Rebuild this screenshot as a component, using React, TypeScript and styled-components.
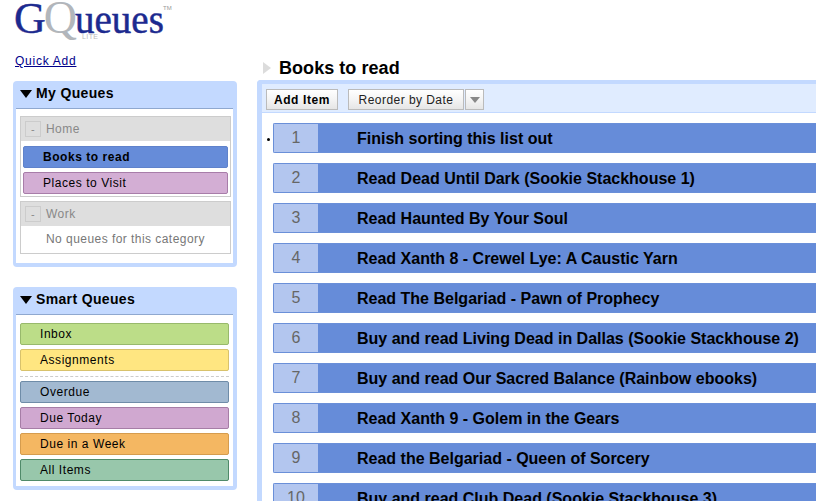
import React from 'react';
import styled, { createGlobalStyle } from 'styled-components';

const GlobalStyle = createGlobalStyle`
  html, body {
    margin: 0;
    padding: 0;
    height: 501px;
    overflow: hidden;
    background: #fff;
    font-family: 'Liberation Sans', Arial, sans-serif;
  }
`;

const myQueues = [
  { name: 'Books to read', bg: '#668cd9', line: '#5f82cb', bold: true },
  { name: 'Places to Visit', bg: '#d3aed4', line: '#a87da9', bold: false },
];

const smartTop = [
  { name: 'Inbox', bg: '#bcdd88', line: '#98b96c' },
  { name: 'Assignments', bg: '#ffe681', line: '#d8c26c' },
];

const smartBottom = [
  { name: 'Overdue', bg: '#a2b9d1', line: '#6f8ca8' },
  { name: 'Due Today', bg: '#d0a8d0', line: '#a67da6' },
  { name: 'Due in a Week', bg: '#f4b762', line: '#d59c4e' },
  { name: 'All Items', bg: '#98c7ab', line: '#4f8a69' },
];

const items = [
  'Finish sorting this list out',
  'Read Dead Until Dark (Sookie Stackhouse 1)',
  'Read Haunted By Your Soul',
  'Read Xanth 8 - Crewel Lye: A Caustic Yarn',
  'Read The Belgariad - Pawn of Prophecy',
  'Buy and read Living Dead in Dallas (Sookie Stackhouse 2)',
  'Buy and read Our Sacred Balance (Rainbow ebooks)',
  'Read Xanth 9 - Golem in the Gears',
  'Read the Belgariad - Queen of Sorcery',
  'Buy and read Club Dead (Sookie Stackhouse 3)',
];

const DownArrow = () => (
  <HeadArrow viewBox="0 0 12 8" aria-hidden="true">
    <path d="M0 0h12L6 8z" fill="#000" />
  </HeadArrow>
);

const App = () => {
  return (
    <Page>
      <GlobalStyle />
      <Sidebar>
        <Logo>
          <LogoG>G</LogoG>
          <LogoQ>Q</LogoQ>
          <LogoRest>ueues</LogoRest>
          <LogoTm>TM</LogoTm>
          <LogoLite>LITE</LogoLite>
        </Logo>
        <QuickAdd href="#">Quick Add</QuickAdd>
        <Panel>
          <PanelHead>
            <DownArrow />
            My Queues
          </PanelHead>
          <PanelBody>
            <Group>
              <GroupHead>
                <Toggle>-</Toggle>
                Home
              </GroupHead>
              <GroupList>
                {myQueues.map((q) => (
                  <Queue key={q.name} $bg={q.bg} $line={q.line} $bold={q.bold} $indent={20}>
                    {q.name}
                  </Queue>
                ))}
              </GroupList>
            </Group>
            <Group>
              <GroupHead>
                <Toggle>-</Toggle>
                Work
              </GroupHead>
              <EmptyNote>No queues for this category</EmptyNote>
            </Group>
          </PanelBody>
        </Panel>
        <Panel>
          <PanelHead>
            <DownArrow />
            Smart Queues
          </PanelHead>
          <SmartBody>
            {smartTop.map((q) => (
              <Queue key={q.name} $bg={q.bg} $line={q.line} $indent={20}>
                {q.name}
              </Queue>
            ))}
            <Dashed />
            {smartBottom.map((q) => (
              <Queue key={q.name} $bg={q.bg} $line={q.line} $indent={20}>
                {q.name}
              </Queue>
            ))}
          </SmartBody>
        </Panel>
      </Sidebar>
      <Main>
        <TitleRow>
          <TitleArrow viewBox="0 0 8 12" aria-hidden="true">
            <path d="M0 0l8 6-8 6z" fill="#dcdcdc" />
          </TitleArrow>
          <Title>Books to read</Title>
        </TitleRow>
        <ListPanel>
          <Toolbar>
            <AddButton>Add Item</AddButton>
            <ReorderButton>Reorder by Date</ReorderButton>
            <ArrowButton>
              <svg width="10" height="6" viewBox="0 0 10 6" aria-hidden="true">
                <path d="M0 0h10L5 6z" fill="#888" />
              </svg>
            </ArrowButton>
          </Toolbar>
          <List>
            {items.map((text, i) => (
              <Row key={text}>
                {i === 0 && <Bullet />}
                <RowNumber>{i + 1}</RowNumber>
                <RowText>{text}</RowText>
              </Row>
            ))}
          </List>
        </ListPanel>
      </Main>
    </Page>
  );
};

const Page = styled.div`
  display: flex;
  width: 816px;
  height: 501px;
  overflow: hidden;
  color: #000;
`;

const Sidebar = styled.div`
  flex: none;
  width: 224px;
  margin-left: 13px;
  display: flex;
  flex-direction: column;
`;

const Logo = styled.div`
  position: relative;
  height: 53px;
  padding-left: 1px;
  display: flex;
  align-items: baseline;
  font-family: 'Liberation Serif', serif;
  color: #1c2a8f;
  white-space: nowrap;
`;

const LogoG = styled.span`
  font-size: 44px;
  line-height: 36px;
  -webkit-text-stroke: 0.4px #1c2a8f;
`;

const LogoQ = styled.span`
  font-size: 46px;
  line-height: 36px;
  margin-left: -2px;
  color: #b2b6bb;
`;

const LogoRest = styled.span`
  font-size: 39px;
  line-height: 36px;
  margin-left: -2px;
  -webkit-text-stroke: 0.5px #1c2a8f;
`;

const LogoTm = styled.span`
  position: absolute;
  left: 150px;
  top: 5px;
  font: 6px 'Liberation Sans', sans-serif;
  color: #999;
`;

const LogoLite = styled.span`
  position: absolute;
  left: 69px;
  top: 33px;
  font: 7px 'Liberation Sans', sans-serif;
  letter-spacing: 0.4px;
  color: #bbb;
`;

const QuickAdd = styled.a`
  align-self: flex-start;
  margin-left: 2px;
  font-size: 12px;
  line-height: 17px;
  letter-spacing: 0.75px;
  color: #00008b;
`;

const Panel = styled.section`
  margin-top: 11px;
  background: #c3d9ff;
  border-radius: 4px;
  padding: 0 4px 4px 3px;

  & + & {
    margin-top: 20px;
  }
`;

const PanelHead = styled.h3`
  margin: 0;
  height: 27px;
  padding: 0 0 3px 4px;
  box-sizing: border-box;
  display: flex;
  align-items: center;
  gap: 4px;
  font-size: 14px;
  font-weight: 700;
  letter-spacing: 0.35px;
`;

const HeadArrow = styled.svg`
  width: 12px;
  height: 8px;
  margin-top: 2px;
`;

const PanelBody = styled.div`
  background: #fff;
  border-top: 1px solid #8fa8cf;
  padding: 7px 2px 9px 4px;
  display: flex;
  flex-direction: column;
  gap: 4px;
`;

const SmartBody = styled.div`
  background: #fff;
  border-top: 1px solid #8fa8cf;
  padding: 8px 4px 5px 4px;
  display: flex;
  flex-direction: column;
  gap: 4px;
`;

const Group = styled.div`
  border: 1px solid #ccc;
  border-top: none;
`;

const GroupHead = styled.div`
  height: 25px;
  margin: 0 -1px;
  padding: 0 0 1px 4px;
  background: #dedede;
  border: 1px solid #ccc;
  border-bottom: none;
  box-sizing: border-box;
  display: flex;
  align-items: center;
  gap: 5px;
  font-size: 12px;
  letter-spacing: 0.45px;
  color: #888;
`;

const Toggle = styled.span`
  width: 14px;
  height: 14px;
  border: 1px solid #ccc;
  display: flex;
  align-items: center;
  justify-content: center;
  font-size: 11px;
  color: #888;
`;

const GroupList = styled.div`
  padding: 5px 2px 2px;
  display: flex;
  flex-direction: column;
  gap: 4px;
`;

const EmptyNote = styled.div`
  height: 27px;
  line-height: 26px;
  padding-left: 25px;
  font-size: 12px;
  letter-spacing: 0.45px;
  color: #777;
`;

const Queue = styled.div<{ $bg: string; $line: string; $bold?: boolean; $indent: number }>`
  height: 22px;
  box-sizing: border-box;
  background: ${(p) => p.$bg};
  border: 1px solid ${(p) => p.$line};
  border-radius: 2px;
  padding-left: ${(p) => p.$indent - 1}px;
  font-size: 12px;
  font-weight: ${(p) => (p.$bold ? 700 : 400)};
  letter-spacing: 0.55px;
  line-height: 20px;
`;

const Dashed = styled.div`
  height: 1px;
  box-sizing: border-box;
  margin-top: 1px;
  border-top: 1px dashed #ccc;
`;

const Main = styled.div`
  flex: 1;
  min-width: 0;
  margin-left: 20px;
  display: flex;
  flex-direction: column;
`;

const TitleRow = styled.div`
  height: 80px;
  box-sizing: border-box;
  padding: 56px 0 0 6px;
  display: flex;
  align-items: center;
  gap: 8px;
`;

const TitleArrow = styled.svg`
  width: 8px;
  height: 12px;
`;

const Title = styled.h1`
  margin: 0;
  font-size: 18px;
  line-height: 20px;
  font-weight: 700;
  letter-spacing: 0.05px;
`;

const ListPanel = styled.div`
  flex: 1;
  min-height: 0;
  background: #fff;
  border-top: 4px solid #c3d9ff;
  border-left: 5px solid #c3d9ff;
  border-top-left-radius: 4px;
`;

const Toolbar = styled.div`
  height: 29px;
  box-sizing: border-box;
  background: #e0ecff;
  border-bottom: 1px solid #c3d9ff;
  display: flex;
  align-items: flex-start;
  padding: 5px 0 0 4px;
`;

const AddButton = styled.button`
  width: 72px;
  height: 21px;
  box-sizing: border-box;
  padding: 0;
  border: 1px solid #bbb;
  background: linear-gradient(#fff, #f4f4f4 50%, #e6e6e6);
  font: 700 12px 'Liberation Sans', sans-serif;
  letter-spacing: 0.6px;
  color: #000;
`;

const ReorderButton = styled(AddButton)`
  width: 116px;
  margin-left: 10px;
  font-weight: 400;
  letter-spacing: 0.45px;
  color: #222;
`;

const ArrowButton = styled(AddButton)`
  width: 19px;
  margin-left: 1px;
  display: flex;
  align-items: center;
  justify-content: center;
`;

const List = styled.div`
  padding: 10px 0 0 11px;
  display: flex;
  flex-direction: column;
  gap: 10px;
`;

const Row = styled.div`
  position: relative;
  height: 30px;
  flex: none;
  box-sizing: border-box;
  display: flex;
  background: #668cd9;
  border: 1px solid #6a8fd8;
  border-right: none;
  border-radius: 2px 0 0 2px;
`;

const Bullet = styled.span`
  position: absolute;
  left: -7px;
  top: 14px;
  width: 3px;
  height: 3px;
  border-radius: 50%;
  background: #000;
`;

const RowNumber = styled.div`
  flex: none;
  width: 44px;
  background: #b3c6ef;
  text-align: center;
  font-size: 16px;
  line-height: 27px;
  color: #666;
`;

const RowText = styled.div`
  padding-left: 39px;
  font-size: 16px;
  font-weight: 700;
  line-height: 29px;
  white-space: nowrap;
  color: #000;
`;

export default App;
